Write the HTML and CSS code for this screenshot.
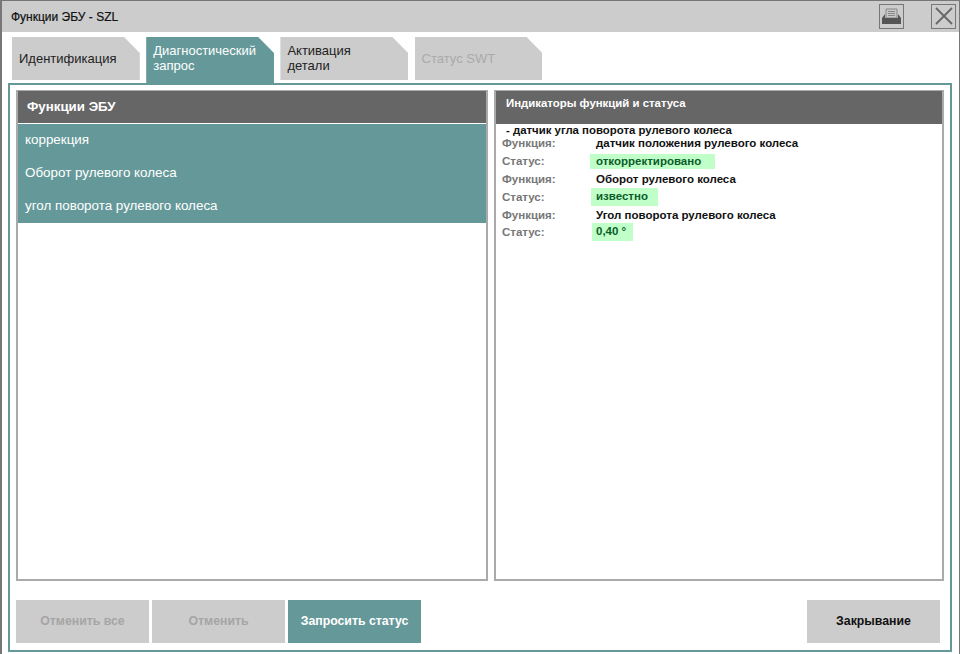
FILE: index.html
```html
<!DOCTYPE html>
<html lang="en">

<head>
    <meta charset="UTF-8">
    <meta name="viewport" content="width=device-width, initial-scale=1.0">
    <title>Функции ЭБУ - SZL</title>
    <link rel="stylesheet" href="styles.css">
</head>

<body>
    <div class="window">
        <div class="titlebar">
            <div class="title">Функции ЭБУ - SZL</div>
            <div class="icon-btn print-btn">
                <svg width="21" height="16" viewBox="0 0 21 16">
                    <path d="M5 1h11v9H5z" fill="#c8c8c8" stroke="#888" stroke-width="1" />
                    <path d="M7 3.500h7M7 5.500h7M7 7.500h7" stroke="#888" stroke-width="1" />
                    <path d="M4 6v4h13V6l3 4v6H1v-6z" fill="#555" />
                </svg>
            </div>
            <div class="icon-btn close-btn">
                <svg width="20" height="20" viewBox="0 0 20 20">
                    <path d="M2 2l16 16M18 2L2 18" stroke="#666" stroke-width="1.800" fill="none" />
                </svg>
            </div>
        </div>
        <ul class="tabs">
            <li>Идентификация</li>
            <li class="active">Диагностический<br>запрос</li>
            <li class="two">Активация<br>детали</li>
            <li class="off">Статус SWT</li>
        </ul>
        <div class="content">
            <div class="panels">
                <div class="panel left">
                    <div class="panel-head">Функции ЭБУ</div>
                    <ul class="func-list">
                        <li>коррекция</li>
                        <li>Оборот рулевого колеса</li>
                        <li>угол поворота рулевого колеса</li>
                    </ul>
                </div>
                <div class="panel right">
                    <div class="panel-head small">Индикаторы функций и статуса</div>
                    <div class="sensor">- датчик угла поворота рулевого колеса</div>
                    <div class="rows">
                        <div class="row"><span class="key">Функция:</span><span class="val">датчик положения рулевого колеса</span></div>
                        <div class="row"><span class="key">Статус:</span><span class="val ok ok1">откорректировано</span></div>
                        <div class="row"><span class="key">Функция:</span><span class="val">Оборот рулевого колеса</span></div>
                        <div class="row"><span class="key">Статус:</span><span class="val ok ok2">известно</span></div>
                        <div class="row"><span class="key">Функция:</span><span class="val">Угол поворота рулевого колеса</span></div>
                        <div class="row"><span class="key">Статус:</span><span class="val ok ok3">0,40 °</span></div>
                    </div>
                </div>
            </div>
            <div class="buttons">
                <div class="btn off">Отменить все</div>
                <div class="btn off">Отменить</div>
                <div class="btn go">Запросить статус</div>
                <div class="btn close">Закрывание</div>
            </div>
        </div>
    </div>
</body>

</html>
```
FILE: styles.css
```css
* {
    box-sizing: border-box;
}

body,
ul,
li {
    margin: 0;
    padding: 0;
    list-style: none;
}

body {
    font-family: "Liberation Sans", Arial, sans-serif;
    background: #fff;
}

.window {
    width: 960px;
    height: 654px;
    border: 1px solid #777;
    border-left-width: 2px;
    border-bottom: 0;
    display: flex;
    flex-direction: column;
    overflow: hidden;
}

.titlebar {
    height: 31px;
    flex: none;
    background: #ccc;
    display: flex;
    align-items: center;
    padding: 0 3px 0 9px;
}

.title {
    font-size: 12px;
    color: #111;
    flex: 1;
    -webkit-text-stroke: 0.200px #111;
}

.icon-btn {
    width: 25px;
    height: 25px;
    border: 1px solid #777;
    display: flex;
    align-items: center;
    justify-content: center;
    margin-top: -1px;
}

.print-btn {
    margin-right: 27px;
}

.tabs {
    display: flex;
    gap: 6.400px;
    padding: 5px 0 0 10px;
    height: 51px;
    flex: none;
}

.tabs li {
    width: 127.800px;
    height: 43px;
    background: #ccc;
    color: #222;
    font-size: 13px;
    line-height: 15px;
    padding: 0 7px;
    display: flex;
    align-items: center;
    clip-path: polygon(0 0, 112px 0, 100% 16px, 100% 100%, 0 100%);
}

.tabs li.two {
    padding-bottom: 2px;
}

.tabs li.active {
    height: 46px;
    background: #659999;
    color: #fff;
    padding-bottom: 5px;
}

.tabs li.off {
    color: #aaa;
}

.content {
    flex: 1;
    margin: 0 7px 2px 6px;
    border: 2px solid #659999;
    padding: 5px 5px 0 6px;
    display: flex;
    flex-direction: column;
}

.panels {
    display: flex;
    gap: 6px;
    height: 491px;
    flex: none;
}

.panel {
    border: 2px solid #aaa;
    border-top-width: 1px;
}

.panel.left {
    width: 472px;
}

.panel.right {
    width: 450px;
}

.panel-head {
    background: #666;
    color: #fff;
    height: 32px;
    font-size: 13.300px;
    font-weight: bold;
    line-height: 32px;
    padding-left: 9px;
}

.panel-head.small {
    height: 33px;
    font-size: 11.400px;
    line-height: 24px;
    padding-left: 10px;
}

.func-list {
    margin-top: 1px;
    background: #659999;
}

.func-list li {
    height: 33px;
    line-height: 32px;
    padding-left: 7px;
    color: #fff;
    font-size: 13.400px;
}

.sensor {
    font-size: 11.400px;
    font-weight: bold;
    line-height: 13px;
    color: #111;
    padding-left: 10px;
}

.rows {
    padding-left: 6px;
    margin-top: -2.500px;
}

.row {
    height: 17.800px;
    display: flex;
    align-items: center;
    font-size: 11.500px;
    font-weight: bold;
}

.key {
    width: 94px;
    color: #777;
}

.val {
    color: #111;
}

.ok {
    background: #c0ffc8;
    color: #0a5c2a;
    height: 18px;
    line-height: 17px;
}

.ok1 {
    width: 125px;
    margin-left: -6px;
    padding-left: 6px;
    height: 15px;
    line-height: 14px;
}

.ok2 {
    width: 67px;
    margin-left: -5px;
    padding-left: 5px;
}

.ok3 {
    width: 41px;
    margin-left: -4px;
    padding-left: 4px;
}

.buttons {
    display: flex;
    gap: 3px;
    margin-top: 19px;
}

.btn {
    width: 133px;
    height: 43px;
    line-height: 43px;
    text-align: center;
    font-size: 12.300px;
    font-weight: bold;
    background: #ccc;
    color: #111;
}

.btn.off {
    color: #a5a5a5;
}

.btn.go {
    background: #659999;
    color: #fff;
}

.btn.close {
    margin-left: auto;
    margin-right: 5px;
}
```
